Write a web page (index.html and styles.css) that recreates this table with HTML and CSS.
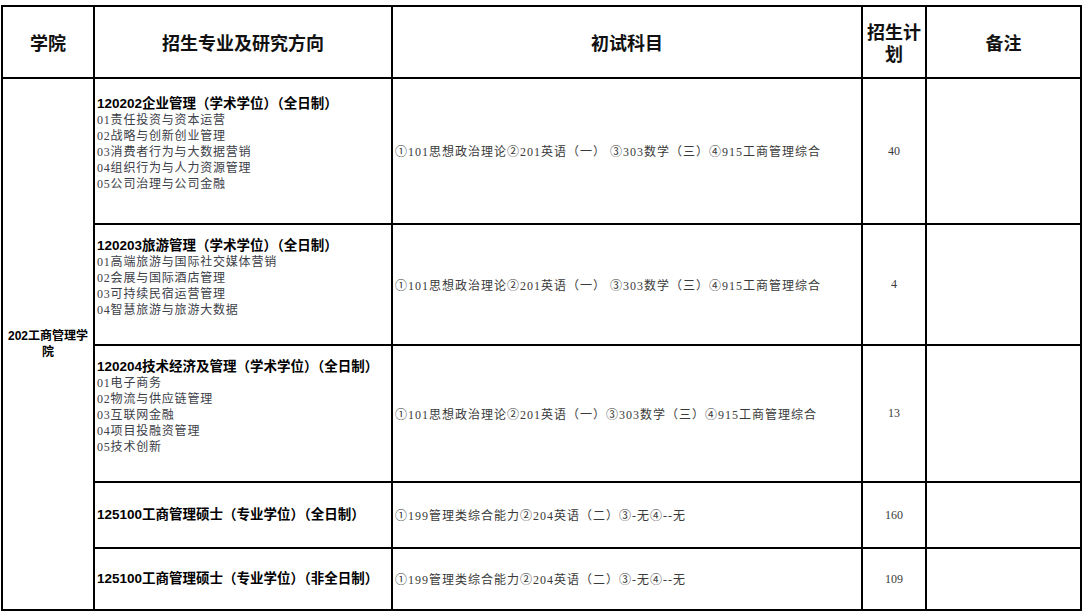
FILE: index.html
```html
<!DOCTYPE html>
<html lang="zh-CN">
<head>
<meta charset="utf-8">
<title>招生专业目录</title>
<link rel="stylesheet" href="styles.css">
</head>
<body>
<table class="plan">
  <colgroup>
    <col class="c-college">
    <col class="c-major">
    <col class="c-exam">
    <col class="c-count">
    <col class="c-note">
  </colgroup>
  <thead>
    <tr class="r-head">
      <th>学院</th>
      <th>招生专业及研究方向</th>
      <th>初试科目</th>
      <th class="narrow">招生计划</th>
      <th>备注</th>
    </tr>
  </thead>
  <tbody>
    <tr class="r1">
      <td class="college" rowspan="5">202工商管理学<br>院</td>
      <td class="major">
        <div class="title">120202企业管理（学术学位）（全日制）</div>
        <div class="dir">01责任投资与资本运营</div>
        <div class="dir">02战略与创新创业管理</div>
        <div class="dir">03消费者行为与大数据营销</div>
        <div class="dir">04组织行为与人力资源管理</div>
        <div class="dir">05公司治理与公司金融</div>
      </td>
      <td class="exam">①101思想政治理论②201英语（一） ③303数学（三）④915工商管理综合</td>
      <td class="count">40</td>
      <td></td>
    </tr>
    <tr class="r2">
      <td class="major">
        <div class="title">120203旅游管理（学术学位）（全日制）</div>
        <div class="dir">01高端旅游与国际社交媒体营销</div>
        <div class="dir">02会展与国际酒店管理</div>
        <div class="dir">03可持续民宿运营管理</div>
        <div class="dir">04智慧旅游与旅游大数据</div>
      </td>
      <td class="exam">①101思想政治理论②201英语（一） ③303数学（三）④915工商管理综合</td>
      <td class="count">4</td>
      <td></td>
    </tr>
    <tr class="r3">
      <td class="major">
        <div class="title">120204技术经济及管理（学术学位）（全日制）</div>
        <div class="dir">01电子商务</div>
        <div class="dir">02物流与供应链管理</div>
        <div class="dir">03互联网金融</div>
        <div class="dir">04项目投融资管理</div>
        <div class="dir">05技术创新</div>
      </td>
      <td class="exam">①101思想政治理论②201英语（一）③303数学（三）④915工商管理综合</td>
      <td class="count">13</td>
      <td></td>
    </tr>
    <tr class="r4">
      <td class="major single"><div class="title">125100工商管理硕士（专业学位）（全日制）</div></td>
      <td class="exam">①199管理类综合能力②204英语（二）③-无④--无</td>
      <td class="count">160</td>
      <td></td>
    </tr>
    <tr class="r5">
      <td class="major single"><div class="title">125100工商管理硕士（专业学位）（非全日制）</div></td>
      <td class="exam">①199管理类综合能力②204英语（二）③-无④--无</td>
      <td class="count">109</td>
      <td></td>
    </tr>
  </tbody>
</table>
</body>
</html>
```
FILE: styles.css
```css
html, body {
  margin: 0;
  padding: 0;
  background: #ffffff;
}
body {
  padding: 5px 0 0 1px;
}
.plan {
  border-collapse: collapse;
  table-layout: fixed;
  width: 1079px;
  font-family: "Liberation Serif", "Noto Sans CJK SC", serif;
  font-size: 12px;
  color: #3a3a3a;
}
.c-college { width: 92px; }
.c-major { width: 298px; }
.c-exam { width: 470px; }
.c-count { width: 64px; }
.c-note { width: 155px; }

.plan th,
.plan td {
  border: 2px solid #000;
  padding: 0 2px;
}
.plan th {
  font-family: "Noto Sans CJK SC", sans-serif;
  font-weight: 700;
  font-size: 18px;
  line-height: 22px;
  color: #111;
  text-align: center;
  vertical-align: middle;
}
.plan th.narrow { padding: 0 4px; }

.r-head { height: 72px; }
.r1 { height: 146px; }
.r2 { height: 121px; }
.r3 { height: 137px; }
.r4 { height: 66px; }
.r5 { height: 62px; }

.plan td.college {
  font-family: "Liberation Sans", "Noto Sans CJK SC", sans-serif;
  font-weight: 700;
  font-size: 12px;
  line-height: 16px;
  color: #000;
  text-align: center;
  vertical-align: middle;
  padding: 0 1px;
}
.plan td.major {
  vertical-align: middle;
  padding: 0 2px 14px 2px;
  line-height: 16px;
}
.plan td.major.single { padding-bottom: 0; }
.title {
  font-family: "Liberation Sans", "Noto Sans CJK SC", sans-serif;
  font-weight: 700;
  font-size: 13.5px;
  color: #000;
  white-space: nowrap;
}
.dir {
  font-weight: 400;
  color: #3c4048;
  letter-spacing: 0.8px;
}
.plan td.exam {
  vertical-align: middle;
  text-align: left;
  color: #3a3a3a;
  white-space: nowrap;
  padding-left: 2px;
  letter-spacing: 1px;
}
.plan td.count {
  text-align: center;
  vertical-align: middle;
  color: #3a3a3a;
}
```
